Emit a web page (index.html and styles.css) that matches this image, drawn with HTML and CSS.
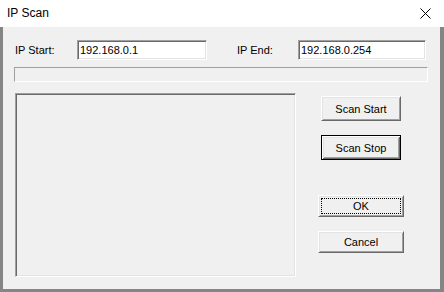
FILE: index.html
```html
<!DOCTYPE html>
<html lang="en">
<head>
  <meta charset="UTF-8" />
  <title>IP Scan</title>
  <link rel="stylesheet" href="styles.css">
</head>
<body>
  <div class="window">
    <div class="titlebar">
      <span class="title">IP Scan</span>
      <svg class="close" width="11" height="11" viewBox="0 0 11 11">
        <path d="M0.5 0.5 L10.5 10.5 M10.5 0.5 L0.5 10.5" stroke="#000" stroke-width="1" fill="none"/>
      </svg>
    </div>

    <div class="client">
      <div class="range">
        <label class="lbl lbl-start">IP Start:</label>
        <input type="text" class="ip ip-start" value="192.168.0.1" />
        <label class="lbl lbl-end">IP End:</label>
        <input type="text" class="ip ip-end" value="192.168.0.254" />
      </div>

      <div class="progress"></div>

      <div class="main">
        <div class="list"></div>
        <div class="actions">
          <button class="btn btn-scan">Scan Start</button>
          <button class="btn btn-scan btn-default">Scan Stop</button>
          <button class="btn btn-ok"><span class="focus">OK</span></button>
          <button class="btn btn-cancel">Cancel</button>
        </div>
      </div>
    </div>
  </div>
</body>
</html>
```

FILE: styles.css
```css
* {
  box-sizing: border-box;
}

body {
  margin: 0;
  background: #fff;
  font-family: 'Liberation Sans', Arial, sans-serif;
  font-size: 11px;
  color: #000;
}

.window {
  width: 444px;
  height: 292px;
  display: flex;
  flex-direction: column;
}

.titlebar {
  height: 27px;
  background: #fff;
  display: flex;
  align-items: center;
  justify-content: space-between;
  padding: 0 13px 1px 7px;
}

.title {
  font-size: 12px;
}

.client {
  flex: 1;
  background: #f0f0f0;
  border-left: 3px solid #858585;
  border-right: 4px solid #858585;
  border-bottom: 3px solid #858585;
  padding: 13px 0 0 11px;
}

.range {
  display: flex;
  align-items: center;
  height: 20px;
}

.lbl {
  display: block;
}

.lbl-start {
  margin-left: 1px;
  width: 62px;
}

.lbl-end {
  margin-left: 30px;
  width: 61px;
}

.ip {
  height: 20px;
  margin: 0;
  padding: 0 0 0 2px;
  font-family: inherit;
  font-size: 11px;
  color: #000;
  background: #fff;
  border: 1px solid;
  border-color: #a0a0a0 #fff #fff #a0a0a0;
  box-shadow: inset 1px 1px #696969, inset -1px -1px #e3e3e3;
  outline: none;
}

.ip-start {
  width: 130px;
}

.ip-end {
  width: 128px;
}

.progress {
  margin-top: 7px;
  width: 414px;
  height: 15px;
  border: 1px solid;
  border-color: #a0a0a0 #fff #fff #a0a0a0;
}

.main {
  display: flex;
  margin-top: 11px;
}

.list {
  margin-left: 1px;
  width: 281px;
  height: 184px;
  border: 1px solid;
  border-color: #a0a0a0 #fff #fff #a0a0a0;
  box-shadow: inset 1px 1px #696969, inset -1px -1px #e3e3e3;
}

.actions {
  width: 130px;
  display: flex;
  flex-direction: column;
  align-items: center;
  padding-top: 3px;
}

.btn {
  margin: 0;
  padding: 0;
  font-family: inherit;
  font-size: 11px;
  color: #000;
  background: #f0f0f0;
  border: 1px solid;
  border-color: #fff #696969 #696969 #fff;
  box-shadow: inset 1px 1px #e3e3e3, inset -1px -1px #a0a0a0;
}

.btn-scan {
  width: 80px;
  height: 25px;
}

.btn-scan + .btn-scan {
  margin-top: 14px;
}

.btn-default {
  border: 1px solid #000;
  box-shadow: inset 1px 1px #fff, inset -1px -1px #696969, inset 2px 2px #e3e3e3, inset -2px -2px #a0a0a0;
}

.btn-ok,
.btn-cancel {
  width: 86px;
  height: 22px;
}

.btn-ok {
  margin-top: 35px;
  padding: 2px;
}

.btn-cancel {
  margin-top: 14px;
}

.focus {
  display: flex;
  align-items: center;
  justify-content: center;
  height: 100%;
  border: 1px dotted #000;
}
```
